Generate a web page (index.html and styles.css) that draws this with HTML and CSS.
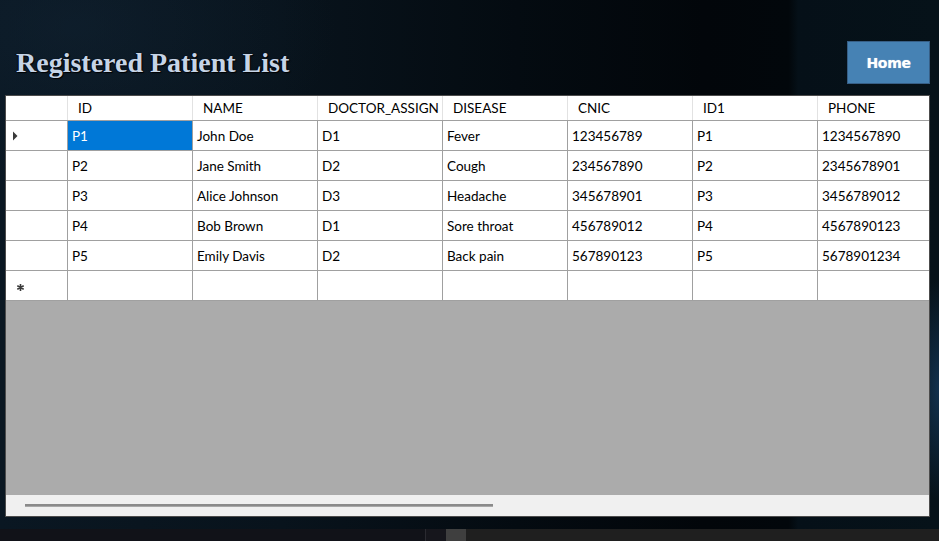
FILE: index.html
```html
<!DOCTYPE html>
<html>
<head>
<meta charset="utf-8">
<link rel="stylesheet" href="styles.css">
</head>
<body>
<div class="page">
  <div class="topbar">
    <h1 class="title">Registered Patient List</h1>
    <button class="home-btn">Home</button>
  </div>
  <div class="grid-frame">
    <div class="grid head">
      <div class="hcell rowhead"></div>
      <div class="hcell">ID</div>
      <div class="hcell">NAME</div>
      <div class="hcell">DOCTOR_ASSIGN</div>
      <div class="hcell">DISEASE</div>
      <div class="hcell">CNIC</div>
      <div class="hcell">ID1</div>
      <div class="hcell">PHONE</div>
    </div>
    <div class="grid body">
      <div class="cell rowhead"><svg class="arrow" width="5" height="10" viewBox="0 0 5 10"><path d="M0 0.5 L4.5 5 L0 9.5 Z" fill="#3a3a3a"/></svg></div>
      <div class="cell selected">P1</div><div class="cell">John Doe</div><div class="cell">D1</div><div class="cell">Fever</div><div class="cell">123456789</div><div class="cell">P1</div><div class="cell">1234567890</div>

      <div class="cell rowhead"></div>
      <div class="cell">P2</div><div class="cell">Jane Smith</div><div class="cell">D2</div><div class="cell">Cough</div><div class="cell">234567890</div><div class="cell">P2</div><div class="cell">2345678901</div>

      <div class="cell rowhead"></div>
      <div class="cell">P3</div><div class="cell">Alice Johnson</div><div class="cell">D3</div><div class="cell">Headache</div><div class="cell">345678901</div><div class="cell">P3</div><div class="cell">3456789012</div>

      <div class="cell rowhead"></div>
      <div class="cell">P4</div><div class="cell">Bob Brown</div><div class="cell">D1</div><div class="cell">Sore throat</div><div class="cell">456789012</div><div class="cell">P4</div><div class="cell">4567890123</div>

      <div class="cell rowhead"></div>
      <div class="cell">P5</div><div class="cell">Emily Davis</div><div class="cell">D2</div><div class="cell">Back pain</div><div class="cell">567890123</div><div class="cell">P5</div><div class="cell">5678901234</div>

      <div class="cell rowhead"><svg class="star" width="7" height="7" viewBox="0 0 7 7"><path d="M3.5 0 V7 M0.3 1.7 L6.7 5.3 M0.3 5.3 L6.7 1.7" stroke="#3a3a3a" stroke-width="1.6"/></svg></div>
      <div class="cell"></div><div class="cell"></div><div class="cell"></div><div class="cell"></div><div class="cell"></div><div class="cell"></div><div class="cell"></div>
    </div>
    <div class="empty-area"></div>
    <div class="hscroll"><div class="thumb"></div></div>
  </div>
  <div class="bottom-gap"></div>
  <div class="taskbar">
    <div class="tb-left"></div>
    <div class="tb-sep"></div>
    <div class="tb-icon"></div>
    <div class="tb-rest"></div>
  </div>
</div>
</body>
</html>
```

FILE: styles.css
```css
* { box-sizing: border-box; }
html, body { margin: 0; padding: 0; }
body {
  width: 939px;
  height: 541px;
  overflow: hidden;
  font-family: "Lato", "Liberation Sans", sans-serif;
}
.page {
  width: 939px;
  height: 541px;
  display: flex;
  flex-direction: column;
  background:
    radial-gradient(ellipse 260px 160px at 8% 5%, rgba(20,40,58,0.4), rgba(0,0,0,0)),
    radial-gradient(ellipse 30px 110px at 100% 72%, rgba(30,80,130,0.5), rgba(0,0,0,0)),
    linear-gradient(90deg, #0a1722 0%, #08131c 30%, #040b11 55%, #02060a 75%, #02070b 84%, #051018 85%, #061219 100%);
}
.topbar {
  height: 95px;
  padding: 41px 9px 0 16px;
  display: flex;
  justify-content: space-between;
  align-items: flex-start;
}
.title {
  margin: 8px 0 0 0;
  font-family: "Liberation Serif", serif;
  font-weight: bold;
  font-size: 28px;
  line-height: 28px;
  color: #c6d4e6;
  text-shadow: 1px 1px 1px #000, -1px 0 1px rgba(0,0,0,0.6);
}
.home-btn {
  width: 83px;
  height: 43px;
  margin: 0;
  padding: 0;
  background: #4682b4;
  border: 1px solid #375f86;
  color: #ffffff;
  font-family: "DejaVu Sans", sans-serif;
  font-weight: bold;
  font-size: 14px;
  letter-spacing: -0.3px;
  text-shadow: 0 0 1px rgba(255,255,255,0.6);
}
.grid-frame {
  margin-left: 5px;
  width: 925px;
  height: 422px;
  border: 1px solid #4c4c4c;
  background: #ababab;
  display: flex;
  flex-direction: column;
  overflow: hidden;
}
.grid {
  display: grid;
  grid-template-columns: 61px repeat(7, 124px);
  column-gap: 1px;
  width: max-content;
  flex: none;
}
.head {
  background: #e2e2e2;
  height: 25px;
  border-bottom: 1px solid #a0a0a0;
  grid-template-rows: 24px;
}
.body {
  background: #a0a0a0;
  row-gap: 1px;
  grid-template-rows: repeat(6, 29px);
}
.hcell {
  background: #ffffff;
  color: #000;
  font-size: 13.5px;
  line-height: 25px;
  padding-left: 10px;
  white-space: nowrap;
  overflow: hidden;
}
.cell {
  background: #ffffff;
  color: #000;
  font-size: 13.5px;
  line-height: 31px;
  padding-left: 4px;
  white-space: nowrap;
  overflow: hidden;
}
.hcell.rowhead, .cell.rowhead { padding-left: 0; position: relative; }
.cell.selected {
  background: #0078d7;
  color: #ffffff;
}
.arrow { position: absolute; left: 7px; top: 10px; }
.star { position: absolute; left: 11px; top: 13px; }
.empty-area {
  flex: 1;
  background: #ababab;
  border-top: 1px solid #a0a0a0;
}
.hscroll {
  height: 21px;
  flex: none;
  background: #f0f0f0;
  padding: 9px 0 0 19px;
}
.thumb {
  width: 468px;
  height: 3px;
  background: #8a8a8a;
  border-bottom: 1px solid #a8a8a8;
}
.bottom-gap { height: 12px; flex: none; }
.taskbar {
  flex: 1;
  display: flex;
}
.tb-left { width: 425px; background: #111218; }
.tb-sep { width: 21px; background: #16161c; border-left: 1px solid #2a2a30; }
.tb-icon { width: 20px; background: #3f3f3f; }
.tb-rest { flex: 1; background: #1f1f1f; }
```
